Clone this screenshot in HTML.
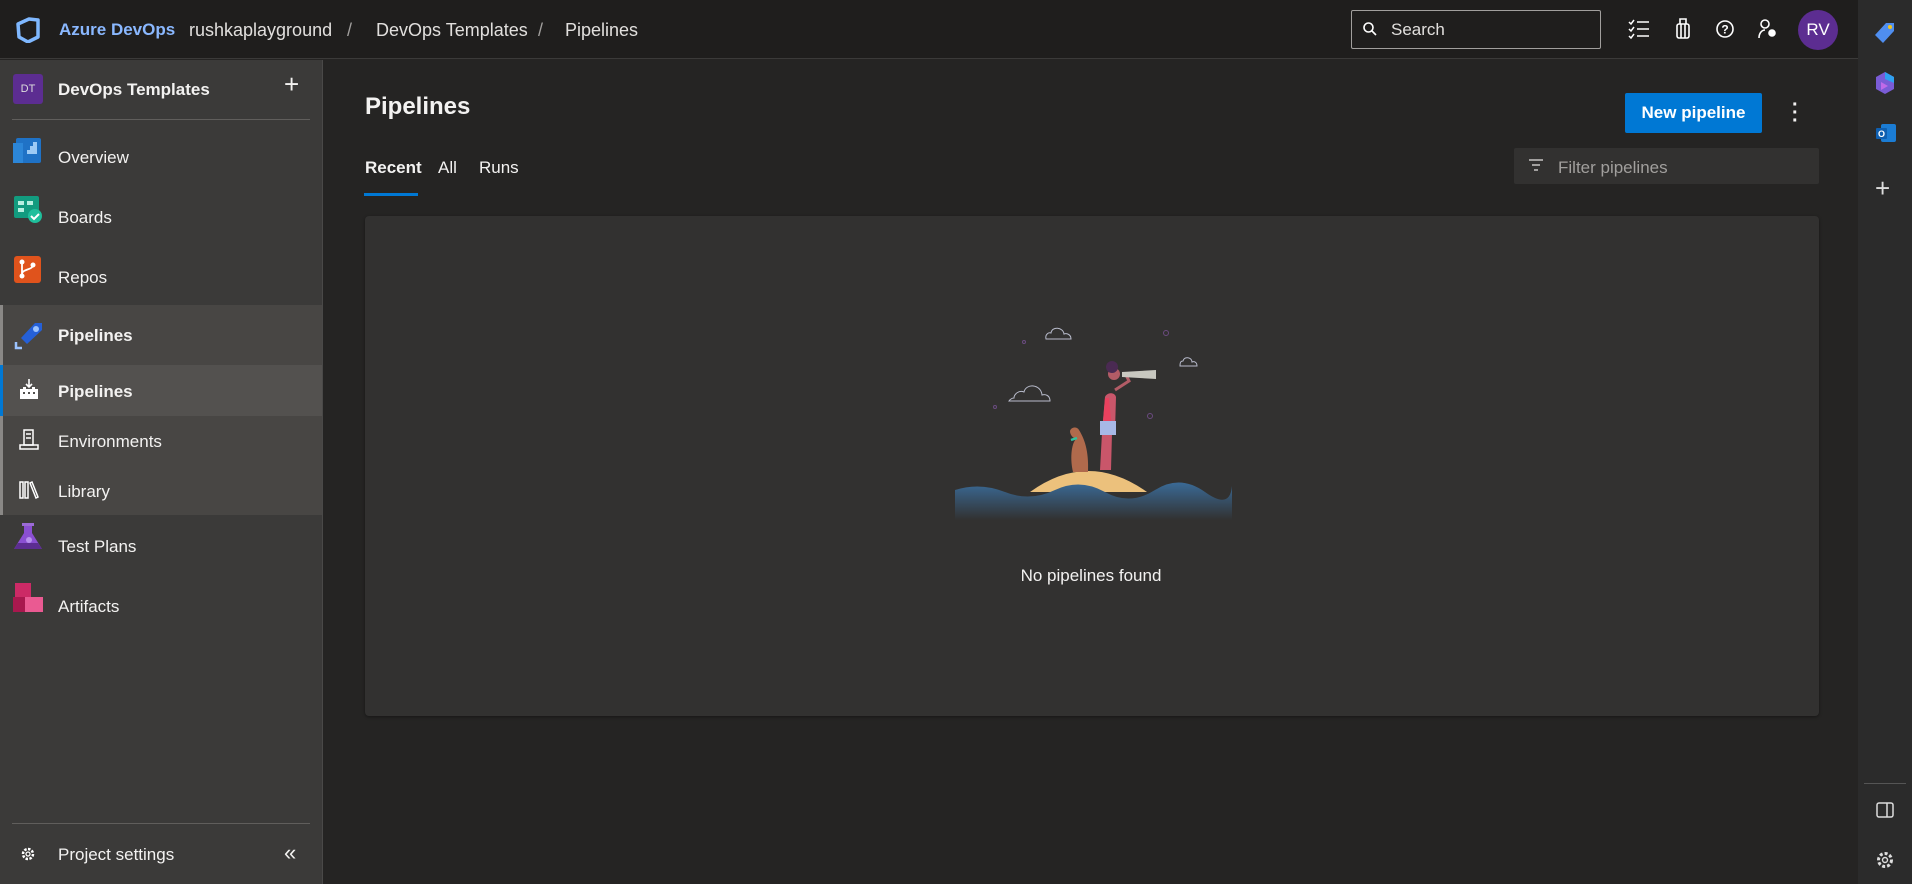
<!DOCTYPE html>
<html><head><meta charset="utf-8"><style>
*{box-sizing:border-box;margin:0;padding:0}
body{width:1912px;height:884px;overflow:hidden;background:#252423;font-family:"Segoe UI","Liberation Sans",sans-serif;color:#f3f2f1;position:relative}
.hdr{position:absolute;left:0;top:0;width:1858px;height:59px;background:#1f1e1d;border-bottom:1px solid #3b3a39}
.side{position:absolute;left:0;top:60px;width:323px;height:824px;background:#3b3a39;border-right:1px solid #4a4948}
.rbar{position:absolute;left:1858px;top:0;width:54px;height:884px;background:#2b2b2b}
.t{position:absolute;white-space:nowrap}
.nav{position:absolute;left:0;width:322px;font-size:17px}
.nav .ic{position:absolute;left:13px;width:30px;height:30px}
.nav span{position:absolute;left:58px}
</style></head><body>
<div class="hdr">
 <svg style="position:absolute;left:16px;top:17px" width="26" height="26" viewBox="0 0 26 26"><path d="M2 7 L13 2 L22 3 L22 20 L12 25 L3 20 Z" fill="none" stroke="#7fb8ff" stroke-width="3.5" stroke-linejoin="round"/><path d="M9 8 L17 6 L17 18 L9 20 Z" fill="#1f1e1d"/></svg>
 <div class="t" style="left:59px;top:20px;font-size:17px;font-weight:700;color:#8ab8ff">Azure DevOps</div>
 <div class="t" style="left:189px;top:20px;font-size:18px;color:#e1dfdd">rushkaplayground</div>
 <div class="t" style="left:347px;top:20px;font-size:18px;color:#a19f9d">/</div>
 <div class="t" style="left:376px;top:20px;font-size:18px;color:#e1dfdd">DevOps Templates</div>
 <div class="t" style="left:538px;top:20px;font-size:18px;color:#a19f9d">/</div>
 <div class="t" style="left:565px;top:20px;font-size:18px;color:#e1dfdd">Pipelines</div>
 <div style="position:absolute;left:1351px;top:10px;width:250px;height:39px;border:1px solid #a19f9d;border-radius:2px"></div>
 <svg style="position:absolute;left:1362px;top:21px" width="16" height="16" viewBox="0 0 16 16"><circle cx="6.5" cy="6.5" r="4.5" fill="none" stroke="#fff" stroke-width="1.6"/><path d="M10 10 L14 14" stroke="#fff" stroke-width="1.6"/></svg>
 <div class="t" style="left:1391px;top:20px;font-size:17px;color:#e1dfdd">Search</div>
 <svg style="position:absolute;left:1628px;top:19px" width="22" height="20" viewBox="0 0 22 20" stroke="#fff" stroke-width="1.5" fill="none"><path d="M1 3l2 2 3-4M1 10l2 2 3-4M1 17l2 2 3-4M9 3h12M9 10h12M9 17h12"/></svg>
 <svg style="position:absolute;left:1676px;top:17px" width="14" height="22" viewBox="0 0 14 22" stroke="#fff" stroke-width="1.6" fill="none"><rect x="1" y="7" width="12" height="14" rx="2"/><path d="M4 7V2h6v5M5 7v14M9 7v14"/></svg>
 <svg style="position:absolute;left:1715px;top:19px" width="20" height="20" viewBox="0 0 20 20"><circle cx="10" cy="10" r="8" fill="none" stroke="#fff" stroke-width="1.6"/><text x="10" y="14.5" font-size="12" font-weight="700" text-anchor="middle" fill="#fff" font-family="Liberation Sans">?</text></svg>
 <svg style="position:absolute;left:1757px;top:18px" width="22" height="22" viewBox="0 0 22 22" stroke="#fff" stroke-width="1.6" fill="none"><circle cx="8" cy="6" r="4"/><path d="M2 20c0-5 3-8 6-8"/><circle cx="15" cy="15" r="3" fill="#fff"/></svg>
 <div style="position:absolute;left:1798px;top:10px;width:40px;height:40px;border-radius:50%;background:#5c2d91;color:#fff;font-size:17px;text-align:center;line-height:40px">RV</div>
</div>
<div class="side">
 <div style="position:absolute;left:13px;top:14px;width:30px;height:30px;background:#5c2d91;border-radius:3px;color:#ddd;font-size:11px;text-align:center;line-height:30px">DT</div>
 <div class="t" style="left:58px;top:20px;font-size:17px;font-weight:700">DevOps Templates</div>
 <div class="t" style="left:284px;top:9px;font-size:26px;font-weight:300">+</div>
 <div style="position:absolute;left:12px;top:59px;width:298px;height:1px;background:#605e5c"></div>
 <div class="nav" style="top:74px;height:50px"><svg class="ic" viewBox="0 0 30 30"><rect x="3" y="4" width="25" height="25" rx="2" fill="#1f72c6"/><rect x="0" y="9" width="10" height="20" fill="#2c86d8"/><path d="M14 20h10V8h-4v4h-3v4h-3z" fill="#9ccaf5"/></svg><span style="top:14px">Overview</span></div>
 <div class="nav" style="top:134px;height:50px"><svg class="ic" viewBox="0 0 30 30"><rect x="1" y="2" width="25" height="22" rx="2" fill="#129b7f"/><rect x="5" y="7" width="6" height="4" fill="#b7efe0"/><rect x="14" y="7" width="6" height="4" fill="#b7efe0"/><rect x="5" y="14" width="6" height="4" fill="#b7efe0"/><circle cx="22" cy="22" r="7" fill="#1fbf9c"/><path d="M18 22l3 3 5-5" stroke="#fff" stroke-width="2" fill="none"/></svg><span style="top:14px">Boards</span></div>
 <div class="nav" style="top:194px;height:50px"><svg class="ic" viewBox="0 0 30 30"><rect x="1" y="2" width="27" height="27" rx="3" fill="#e0531c"/><circle cx="9" cy="8" r="2.5" fill="#fff"/><circle cx="9" cy="22" r="2.5" fill="#fff"/><circle cx="20" cy="11" r="2.5" fill="#fff"/><path d="M9 8v14M20 11c0 5-11 4-11 9" stroke="#fff" stroke-width="1.8" fill="none"/></svg><span style="top:14px">Repos</span></div>
 <div style="position:absolute;left:0;top:245px;width:322px;height:210px;background:#484644"></div>
 <div style="position:absolute;left:0;top:245px;width:3px;height:210px;background:#8a8886"></div>
 <div class="nav" style="top:245px;height:60px"><svg class="ic" style="top:15px" viewBox="0 0 30 30"><path d="M8 18 L22 3 L29 3 L29 10 L14 24 Z" fill="#2560d8"/><circle cx="23" cy="9" r="3" fill="#9cc3ff"/><path d="M3 22v6h6" stroke="#9cc3ff" stroke-width="2.5" fill="none"/></svg><span style="top:21px;font-weight:700">Pipelines</span></div>
 <div style="position:absolute;left:0;top:305px;width:322px;height:51px;background:#53514f"></div>
 <div style="position:absolute;left:0;top:305px;width:3px;height:51px;background:#0078d4"></div>
 <div class="nav" style="top:305px;height:51px"><svg class="ic" style="left:19px;top:13px;width:20px;height:22px" viewBox="0 0 20 22"><path d="M10 1v8M7 6l3 3 3-3" stroke="#fff" stroke-width="1.6" fill="none"/><path d="M1 11h3v-2h3v2h6v-2h3v2h3v10H1z" fill="#fff"/><path d="M4 15h2M9 15h2M14 15h2" stroke="#53514f" stroke-width="2"/></svg><span style="top:17px;font-weight:700">Pipelines</span></div>
 <div class="nav" style="top:356px;height:50px"><svg class="ic" style="left:19px;top:13px;width:20px;height:22px" viewBox="0 0 20 22" stroke="#fff" stroke-width="1.5" fill="none"><rect x="5" y="1" width="9" height="15"/><path d="M7 5h5M7 9h5M1 20h18v-4H1z"/></svg><span style="top:16px">Environments</span></div>
 <div class="nav" style="top:406px;height:50px"><svg class="ic" style="left:19px;top:14px;width:22px;height:20px" viewBox="0 0 22 20" stroke="#fff" stroke-width="1.5" fill="none"><rect x="1" y="2" width="3" height="16"/><rect x="6" y="2" width="3" height="16"/><path d="M11 3l2-1 6 15-2 1z"/></svg><span style="top:16px">Library</span></div>
 <div class="nav" style="top:462px;height:50px"><svg class="ic" viewBox="0 0 30 30"><rect x="9" y="1" width="12" height="3" fill="#9b6bd6"/><path d="M11 4v7L1 27h28L19 11V4z" fill="#8a4fd2"/><path d="M5 21h20l4 6H1z" fill="#5c2d91"/><circle cx="16" cy="18" r="3" fill="#b892ee"/></svg><span style="top:15px">Test Plans</span></div>
 <div class="nav" style="top:522px;height:50px"><svg class="ic" viewBox="0 0 30 30"><rect x="2" y="1" width="16" height="16" fill="#cc2a66"/><rect x="0" y="15" width="14" height="15" fill="#a8184e"/><rect x="12" y="15" width="18" height="15" fill="#ea5a92"/></svg><span style="top:15px">Artifacts</span></div>
 <div style="position:absolute;left:12px;top:763px;width:298px;height:1px;background:#605e5c"></div>
 <svg style="position:absolute;left:20px;top:786px" width="16" height="16" viewBox="0 0 16 16"><circle cx="8" cy="8" r="5" fill="none" stroke="#fff" stroke-width="2.5" stroke-dasharray="2.5 1.4"/><circle cx="8" cy="8" r="2" fill="none" stroke="#fff" stroke-width="1.3"/></svg>
 <div class="t" style="left:58px;top:785px;font-size:17px">Project settings</div>
 <div class="t" style="left:284px;top:780px;font-size:22px">«</div>
</div>
<div class="t" style="left:365px;top:93px;font-size:24px;font-weight:700">Pipelines</div>
<div class="t" style="left:365px;top:158px;font-size:17px;font-weight:700">Recent</div>
<div style="position:absolute;left:364px;top:193px;width:54px;height:3px;background:#0078d4"></div>
<div class="t" style="left:438px;top:158px;font-size:17px">All</div>
<div class="t" style="left:479px;top:158px;font-size:17px">Runs</div>
<div style="position:absolute;left:1625px;top:93px;width:137px;height:40px;background:#0078d4;border-radius:2px;color:#fff;font-size:17px;font-weight:700;text-align:center;line-height:40px">New pipeline</div>
<div class="t" style="left:1792px;top:101px;font-size:20px;font-weight:700;line-height:8px;width:6px;text-align:center">·<br>·<br>·</div>
<div style="position:absolute;left:1514px;top:148px;width:305px;height:36px;background:#323130;border-radius:2px"></div>
<svg style="position:absolute;left:1528px;top:158px" width="16" height="14" viewBox="0 0 16 14" stroke="#c8c6c4" stroke-width="1.4"><path d="M1 2h14M4 7h8M6 12h4"/></svg>
<div class="t" style="left:1558px;top:158px;font-size:17px;color:#a19f9d">Filter pipelines</div>
<div style="position:absolute;left:365px;top:216px;width:1454px;height:500px;background:#323130;border-radius:4px;box-shadow:0 1px 3px rgba(0,0,0,.4)"></div>
<svg style="position:absolute;left:950px;top:310px" width="290" height="210" viewBox="0 0 290 210">
 <defs><linearGradient id="w" x1="0" y1="0" x2="0" y2="1"><stop offset="0" stop-color="#3a6a96"/><stop offset="1" stop-color="#323130"/></linearGradient></defs>
 <g fill="none" stroke="#b9bccc" stroke-width="1"><path d="M96 29h25c0-5-5-6-7-5-1-7-12-8-13-1-3-1-6 2-5 6z"/><path d="M59 91h41c0-6-5-7-8-6-1-11-16-12-18-3-5-2-10 2-10 6-3 0-5 3-5 3z"/><path d="M230 56h17c0-4-3-5-5-4 0-5-8-6-9-1-3 0-3 3-3 5z"/></g>
 <g fill="none" stroke="#6b4b80"><circle cx="74" cy="32" r="1.5"/><circle cx="216" cy="23" r="2.5"/><circle cx="45" cy="97" r="1.5"/><circle cx="200" cy="106" r="2.5"/></g>
 <path d="M80 182 Q138 140 197 182 Z" fill="#ecc17c"/>
 <path d="M5 180 Q30 172 55 182 T105 180 T155 182 T205 180 T255 182 T282 176 L282 210 L5 210 Z" fill="url(#w)"/>
 <path d="M123 162 c-3-12-2-28 3-33 c-3-1-6-4-6-8 c1-4 7-5 9-1 c5 8 10 20 9 42 z" fill="#b06a4c"/>
 <path d="M121 130 l6-2" stroke="#2fc3a0" stroke-width="2.5"/>
 <path d="M150 160 l2-37 h10 l-1 37 M152 122 l3-35 c2-5 10-5 11 0 l-1 35z" fill="#c9566a"/>
 <path d="M155 88 l4 0 2 23 -8 1z" fill="#e9415e"/>
 <rect x="150" y="111" width="16" height="14" fill="#a7b8e6"/>
 <circle cx="164" cy="64" r="6" fill="#b25c66"/><circle cx="162" cy="57" r="6" fill="#4a2a52"/>
 <path d="M165 80 l14-9 l-3-6" stroke="#b25c66" stroke-width="3" fill="none"/>
 <path d="M172 62 L206 60 L206 69 L172 67z" fill="#c8c8c0"/>
</svg>
<div class="t" style="left:1018px;top:566px;font-size:17px;width:146px;text-align:center">No pipelines found</div>
<div class="rbar">
 <svg style="position:absolute;left:16px;top:22px" width="22" height="22" viewBox="0 0 22 22"><path d="M12 1h8v8L9 21 1 13z" fill="#4f8ef0"/><circle cx="16" cy="5" r="2" fill="#f5c518"/></svg>
 <svg style="position:absolute;left:17px;top:71px" width="20" height="24" viewBox="0 0 20 24"><path d="M10 1 L19 6 V18 L10 23 L1 18 V6Z" fill="#7a5cd6"/><path d="M10 1 L19 6 V12 L10 8Z" fill="#2fa0f0"/><path d="M6 11 L13 15 L6 19Z" fill="#c06ae8"/></svg>
 <svg style="position:absolute;left:17px;top:122px" width="22" height="22" viewBox="0 0 22 22"><rect x="6" y="2" width="15" height="18" rx="2" fill="#1b7cd4"/><rect x="1" y="6" width="11" height="11" rx="1" fill="#0f5fb0"/><text x="6.5" y="15" font-size="9" font-weight="700" text-anchor="middle" fill="#fff" font-family="Liberation Sans">O</text></svg>
 <div class="t" style="left:17px;top:173px;font-size:26px;font-weight:300;color:#ddd">+</div>
 <div style="position:absolute;left:6px;top:783px;width:42px;height:1px;background:#555"></div>
 <svg style="position:absolute;left:18px;top:802px" width="18" height="16" viewBox="0 0 18 16" stroke="#ddd" stroke-width="1.5" fill="none"><rect x="1" y="1" width="16" height="14" rx="2"/><path d="M11 1v14"/></svg>
 <svg style="position:absolute;left:17px;top:850px" width="20" height="20" viewBox="0 0 20 20"><circle cx="10" cy="10" r="6.5" fill="none" stroke="#ddd" stroke-width="3" stroke-dasharray="3 2"/><circle cx="10" cy="10" r="2.5" fill="none" stroke="#ddd" stroke-width="1.4"/></svg>
</div>
</body></html>
